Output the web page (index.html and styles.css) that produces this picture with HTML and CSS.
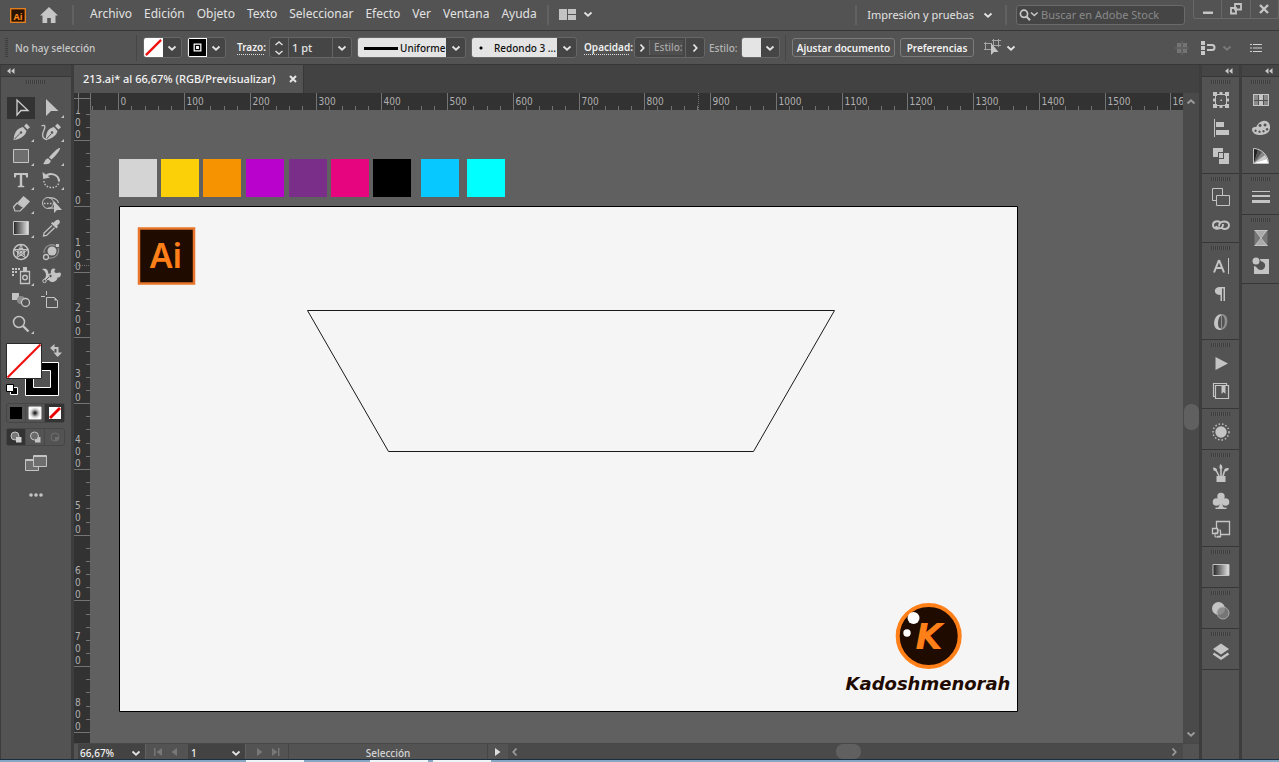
FILE: index.html
```html
<!DOCTYPE html>
<html lang="es">
<head>
<meta charset="utf-8">
<title>213.ai* al 66,67% (RGB/Previsualizar)</title>
<link rel="stylesheet" href="styles.css">
</head>
<body>
<svg class="defs" aria-hidden="true">
  <defs>
    <symbol id="chev" viewBox="0 0 10 10"><path d="M1.5 3.5 5 6.7 8.500 3.500" fill="none" stroke="currentColor" stroke-width="1.8"/></symbol>
    <symbol id="chev-right" viewBox="0 0 10 10"><path d="M3.500 1.500 6.700 5 3.500 8.500" fill="none" stroke="currentColor" stroke-width="1.8"/></symbol>
    <symbol id="collapse" viewBox="0 0 8 6"><path d="M3.500 0v6L0 3zM7.500 0v6L4 3z" fill="currentColor"/></symbol>
    <linearGradient id="fade"><stop offset="0" stop-color="#222"/><stop offset="1" stop-color="#e6e6e6"/></linearGradient>
    <radialGradient id="dot"><stop offset="0" stop-color="#000"/><stop offset=".2" stop-color="#444"/><stop offset=".6" stop-color="#c4c4c4"/><stop offset="1" stop-color="#fff"/></radialGradient>
  </defs>
</svg>

<header class="menubar">
  <svg class="app-logo" viewBox="0 0 16 15"><rect x=".75" y=".75" width="14.500" height="13.500" fill="#2a1200" stroke="#ff8a1c" stroke-width="1.2"/><text x="8" y="11.500" class="app-logo-text">Ai</text></svg>
  <button class="bare home" aria-label="Inicio"><svg viewBox="0 0 18 16"><path d="M9 0 0 8.500h2.500V16h4.700v-5h3.600v5h4.700V8.500H18z" fill="#c6c6c6"/></svg></button>
  <span class="rule"></span>
  <nav class="menus">
    <button class="bare">Archivo</button><button class="bare">Edición</button><button class="bare">Objeto</button><button class="bare">Texto</button><button class="bare">Seleccionar</button><button class="bare">Efecto</button><button class="bare">Ver</button><button class="bare">Ventana</button><button class="bare">Ayuda</button>
  </nav>
  <span class="rule"></span>
  <button class="bare layout" aria-label="Organizar documentos"><svg viewBox="0 0 17 11" width="17" height="11"><path d="M0 0h8v11H0zM9 0h8v5H9zM9 6h8v5H9z" fill="#c4c4c4"/></svg><svg class="c10"><use href="#chev"/></svg></button>
  <span class="grow"></span>
  <span class="rule"></span>
  <button class="bare workspace-name">Impresión y pruebas<svg class="c10"><use href="#chev"/></svg></button>
  <span class="rule"></span>
  <label class="search"><svg viewBox="0 0 20 12" width="20" height="12"><circle cx="5" cy="4.800" r="3.600" fill="none" stroke="#c8c8c8" stroke-width="1.700"/><path d="m7.500 7.500 3.500 3.800" stroke="#c8c8c8" stroke-width="2"/><path d="m12 3.500 3.300 3 3.300-3" fill="none" stroke="#c8c8c8" stroke-width="1.500"/></svg><input type="text" placeholder="Buscar en Adobe Stock" aria-label="Buscar en Adobe Stock"></label>
  <div class="window-buttons">
    <button class="bare" aria-label="Minimizar"><svg viewBox="0 0 12 12"><path d="M1 8.500h10v2.500H1z" fill="#c4c4c4"/></svg></button>
    <button class="bare" aria-label="Restaurar"><svg viewBox="0 0 12 12"><path d="M5 1h6v5.500H5zM1 5h5v5.500H1z" fill="#535353" stroke="#c4c4c4" stroke-width="1.800"/></svg></button>
    <button class="bare" aria-label="Cerrar"><svg viewBox="0 0 12 12"><path d="m2 2 8 8M10 2l-8 8" stroke="#c4c4c4" stroke-width="2.400"/></svg></button>
  </div>
</header>

<section class="control">
  <span class="v-grip"></span>
  <span class="status-text">No hay selección</span>
  <span class="rule dark"></span>
  <div class="combo fill"><svg class="chip" viewBox="0 0 20 20"><path fill="#fff" d="M0 0h20v20H0z"/><path d="M2 18 18 2" stroke="#f01010" stroke-width="2.400"/></svg><button class="drop" aria-label="Relleno"><svg class="c10"><use href="#chev"/></svg></button></div>
  <div class="combo stroke"><svg class="chip" viewBox="0 0 20 20"><path fill="#fff" d="M0 0h20v20H0z"/><path fill="#000" d="M1 1h18v18H1z"/><path fill="none" stroke="#fff" stroke-width="1.300" d="M6.500 6.500h7v7h-7z"/><path fill="#fff" d="M8.500 8.500h3v3h-3z"/></svg><button class="drop" aria-label="Color de trazo"><svg class="c10"><use href="#chev"/></svg></button></div>
  <label class="lbl trazo" for="weight">Trazo:</label>
  <div class="combo weight"><button class="drop" aria-label="Cambiar grosor"><svg viewBox="0 0 10 16" width="10" height="16"><path d="M1.500 5 5 2l3.500 3M1.500 11 5 14l3.500-3" fill="none" stroke="#ddd" stroke-width="1.500"/></svg></button><input id="weight" type="text" value="1 pt"><button class="drop" aria-label="Grosores"><svg class="c10"><use href="#chev"/></svg></button></div>
  <div class="combo light profile"><select aria-label="Perfil de anchura"><option>Uniforme</option></select><span class="drop over"><svg class="c10"><use href="#chev"/></svg></span></div>
  <div class="combo light brush"><select aria-label="Pincel"><option>Redondo 3 ...</option></select><span class="drop over"><svg class="c10"><use href="#chev"/></svg></span></div>
  <button class="bare lbl opacity">Opacidad:</button>
  <div class="combo opts"><button class="drop" aria-label="Opacidad"><svg class="c10"><use href="#chev-right"/></svg></button><span class="disabled">Estilo:</span><button class="drop" aria-label="Más"><svg class="c10"><use href="#chev-right"/></svg></button></div>
  <span class="style-label">Estilo:</span>
  <div class="combo style"><span class="chip plain"></span><button class="drop" aria-label="Estilo gráfico"><svg class="c10"><use href="#chev"/></svg></button></div>
  <span class="rule dark"></span>
  <button class="push fit">Ajustar documento</button>
  <button class="push prefs">Preferencias</button>
  <button class="bare similar" aria-label="Seleccionar objetos similares"><svg viewBox="0 0 17 17" width="17" height="17"><path d="M1.500 4.500h6v6h-6zM9.500 1.500h5v5h-5zM0 4.500h2M0 10.500h2M1.500 3v1M8 1.500h9M8 6.500h9M9.500 0v2M14.500 0v8" fill="none" stroke="#a5a5a5"/><path d="M7 4v12l3-3h4.500z" fill="#c4c4c4"/></svg><svg class="c10"><use href="#chev"/></svg></button>
  <span class="grow"></span>
  <svg class="dim" viewBox="0 0 14 14" width="14" height="14"><path d="M2 2h4v4H2zM8 2h4v4H8zM2 8h4v4H2zM8 8h4v4H8z" fill="#747474"/><path d="M7 0v14M0 7h14" stroke="#6c6c6c"/></svg>
  <button class="bare snap" aria-label="Ajustar a"><svg viewBox="0 0 15 14" width="15" height="14"><path d="M0 0h4v4H0zM0 5h4v4H0zM0 10h4v4H0z" fill="#c8c8c8"/><path d="M6 4h5a2.500 2.500 0 0 1 0 5H6" fill="none" stroke="#c8c8c8" stroke-width="2"/></svg><svg class="c10 faint"><use href="#chev"/></svg></button>
  <button class="bare list" aria-label="Menú"><svg viewBox="0 0 12 10" width="12" height="10"><path d="M0 1.500h2M3 1.500h9M0 5h2M3 5h9M0 8.500h2M3 8.500h9" stroke="#d0d0d0" stroke-width="1.200"/></svg></button>
</section>

<main class="workspace">
  <aside class="tools">
    <div class="panel-head left"><svg class="collapse"><use href="#collapse"/></svg></div>
    <div class="grip wide"></div>
    <div class="tool-grid">
      <button class="tool on" aria-label="Selección"><svg viewBox="0 0 30 24"><path d="M11 4v15l4-4.500h7z" fill="none" stroke="#d0d0d0" stroke-width="1.300"/></svg></button>
      <button class="tool more" aria-label="Selección directa"><svg viewBox="0 0 30 24"><path d="M10 3v17l5-5h7.500z"/></svg></button>
      <button class="tool more" aria-label="Pluma"><svg viewBox="0 0 30 24"><path d="m18 6 2.500-2.500 3.500 3.700-2.500 2.300zM17 7l3.500 4c-1 4-4 6.500-9.500 8.500L7.500 20l.5-3.500c1.500-5.500 4-8.500 9-9.500z"/><path d="m8.500 19 5.500-5.500" stroke="#535353"/><circle cx="15" cy="12.500" r="1.200" fill="#535353"/></svg></button>
      <button class="tool more" aria-label="Curvatura"><svg viewBox="0 0 30 24"><path d="m19 6 2.500-2.500 3.500 3.700-2.500 2.300zM18 7l3.500 4c-1 4-4 6.500-9.500 8.500L9.500 20l.5-3.500c1-5.500 3-8.500 8-9.500z"/><path d="m10.500 19 5-5.500" stroke="#535353"/><circle cx="16" cy="12.500" r="1.200" fill="#535353"/><path d="M5.500 6c4-2 4 1 2.500 4s-3 9 3 9.500" fill="none" stroke="#c4c4c4" stroke-width="1.300"/></svg></button>
      <button class="tool more" aria-label="Rectángulo"><svg viewBox="0 0 30 24"><path d="M7.500 5.500h15v13h-15z" fill="#6e6e6e" stroke="#c4c4c4"/></svg></button>
      <button class="tool more" aria-label="Pincel"><svg viewBox="0 0 30 24"><path d="M24 4c1 1-5 9-8.500 11.500l-2.500-2C16 9.500 22.500 3 24 4zM12 14.300l2.800 2.400c-.3 3.300-4 4.300-7.800 3 2-.7 1.500-4.700 5-5.400z"/></svg></button>
      <button class="tool more" aria-label="Texto"><svg viewBox="0 0 30 24"><path d="M8 5h14v4.500h-1.700L19.500 7H16.200v10.500l2 .5v1.300h-6.400V18l2-.5V7h-3.300l-.8 2.500H8z"/></svg></button>
      <button class="tool more" aria-label="Rotar"><svg viewBox="0 0 30 24"><path d="M9 9c4-5.500 14-3 14 4.500" fill="none" stroke="#c4c4c4" stroke-width="2"/><path d="m6.500 4 .7 7 6.800-1.500z"/><path d="M8 13c0 8 14 9 15 1" fill="none" stroke="#c4c4c4" stroke-dasharray="1.500 1.500" stroke-width="1.400"/></svg></button>
      <button class="tool more" aria-label="Borrador"><svg viewBox="0 0 30 24"><path d="m11.500 10.500 6-6.500 6.500 5.500-6 6.500z"/><path d="m11 11-3.500 4 1.500 4h5l3.500-3.500z" fill="none" stroke="#c4c4c4" stroke-width="1.200"/></svg></button>
      <button class="tool" aria-label="Creador de formas"><svg viewBox="0 0 30 24"><circle cx="12" cy="11" r="5.500" fill="none" stroke="#c4c4c4"/><path d="M13 6c5-1 9 2 9.500 5M12 16c2 .5 4 0 6 0" fill="none" stroke="#c4c4c4" stroke-width="1.200"/><path d="M8 11.500h10" stroke="#c4c4c4" stroke-dasharray="1.500 1.500" stroke-width="1.500"/><path d="M18 9v12l3-3h5z"/></svg></button>
      <button class="tool more" aria-label="Degradado"><svg viewBox="0 0 30 24"><path d="M7.500 5.500h15v13h-15z" fill="url(#fade)" stroke="#c4c4c4"/></svg></button>
      <button class="tool" aria-label="Cuentagotas"><svg viewBox="0 0 30 24"><path d="M23 4c1.500 1.500 1 3-.7 4.500l-1.300 1.300 1 1-1.500 1.700L15 7.500l1.500-1.500 1 .7C19.500 4.500 21.500 3 23 4z"/><path d="m16 9.500-8 7.500-.5 3 3-.5 8-7.700" fill="none" stroke="#c4c4c4" stroke-width="1.300"/></svg></button>
      <button class="tool" aria-label="Malla de simetría"><svg viewBox="0 0 30 24"><circle cx="15" cy="12" r="7.500" fill="none" stroke="#c4c4c4" stroke-width="1.500"/><circle cx="15" cy="12" r="3.600" fill="none" stroke="#c4c4c4"/><path d="m15 4.500 4.500 13.500L8 9.500h14L10.500 18z" fill="none" stroke="#c4c4c4"/><circle cx="15" cy="12" r="1.600"/></svg></button>
      <button class="tool" aria-label="Fusión"><svg viewBox="0 0 30 24"><circle cx="16" cy="11" r="4.500"/><circle cx="10" cy="17" r="2.500" fill="none" stroke="#c4c4c4" stroke-width="1.300"/><path d="M8 13c0-7 7-10 12-7M22 8c2 6-3 11-9 10" fill="none" stroke="#8c8c8c" stroke-width="1.300"/><path d="M20 4h3v3h-3z"/></svg></button>
      <button class="tool more" aria-label="Rociador de símbolos"><svg viewBox="0 0 30 24"><path d="M6 4h2v2H6zM9 4h2v2H9zM12 4h2v2h-2zM6 7h2v2H6zM9 7h2v2H9zM6 10h2v2H6zM17 3h4v4h-4z"/><path d="M14.500 7.500h9v12h-9z" fill="none" stroke="#c4c4c4" stroke-width="1.300"/><circle cx="19" cy="13.500" r="2.300" fill="none" stroke="#c4c4c4" stroke-width="1.400"/></svg></button>
      <button class="tool" aria-label="Deformación de posición libre"><svg viewBox="0 0 30 24"><path d="M6 5c5-1 6 1 6.500 5l2.500-1c-1-4 3-6 4.500-3.500-2 1-1 3.500 1 3.500s3.500-1.500 4.500.5c0 3-1.500 4.500-3.500 4 0 2-2 4.500-5 4.500s-3-2-4.500-2-2.500 1-4 2l-1-2c2-1.500 3-3 3-5S9 7 6 5z"/><path d="m9 17 6-6" stroke="#535353"/><circle cx="14.500" cy="12" r="1.700" fill="#535353" stroke="#c4c4c4"/><circle cx="8.500" cy="17" r="1.700" fill="#535353" stroke="#c4c4c4"/></svg></button>
      <button class="tool" aria-label="Fusionar"><svg viewBox="0 0 30 24"><path d="M6 5h7v7H6z"/><circle cx="15" cy="12" r="4" fill="#8d8d8d"/><circle cx="19.500" cy="14.500" r="4" fill="#535353" stroke="#c4c4c4" stroke-width="1.300"/></svg></button>
      <button class="tool" aria-label="Mesa de trabajo"><svg viewBox="0 0 30 24"><path d="M10.500 9.500h8l3 3v7h-11zM10.500 3v4M5 8.500h4" fill="none" stroke="#c4c4c4"/><path d="M18.500 9.500v3h3z"/></svg></button>
      <button class="tool more" aria-label="Zoom"><svg viewBox="0 0 30 24"><circle cx="13" cy="10" r="5.500" fill="none" stroke="#c4c4c4" stroke-width="1.500"/><path d="m17 14 5.500 5.500" stroke="#c4c4c4" stroke-width="2.400"/></svg></button>
    </div>
    <svg class="fill-stroke" viewBox="0 0 60 58" role="img" aria-label="Relleno y trazo">
      <path d="M19.500 19.500h33v33h-33z" fill="#000" stroke="#fff"/><path d="M27.500 27.500h17v17h-17z" fill="#535353" stroke="#fff"/>
      <path d="M.5.500h35v35H.500z" fill="#fff" stroke="#2a2a2a"/><path d="M1.500 34.500 34.500 1.500" stroke="#f01010" stroke-width="2.200"/>
      <path d="M46 5h5.500v8" fill="none" stroke="#c4c4c4" stroke-width="2"/><path d="M44 5l4.500-4v8zM47.500 9.500h8.500L51.700 14z" fill="#c4c4c4"/>
      <path d="M4.500 44.500h7v7h-7z" fill="#000" stroke="#fff"/><path d="M.5 41.500h7v7h-7z" fill="#fff" stroke="#000"/>
    </svg>
    <div class="segments">
      <button aria-label="Color"><svg viewBox="0 0 14 14"><path d="M1 1h12v12H1z" fill="#000"/></svg></button>
      <button aria-label="Degradado"><svg viewBox="0 0 14 14"><path d="M1 1h12v12H1z" fill="url(#dot)" stroke="#eee"/></svg></button>
      <button class="on" aria-label="Ninguno"><svg viewBox="0 0 14 14"><path d="M1 1h12v12H1z" fill="#fff"/><path d="M2 12 12 2" stroke="#e80000" stroke-width="2.800"/></svg></button>
    </div>
    <div class="segments modes">
      <button class="on" aria-label="Dibujar normal"><svg viewBox="0 0 14 14"><circle cx="6" cy="6" r="4" fill="#777" stroke="#c4c4c4"/><path d="M7 7h5.500v5.500H7z" fill="#d0d0d0"/></svg></button>
      <button aria-label="Dibujar detrás"><svg viewBox="0 0 14 14"><path d="M7 7h5.500v5.500H7z" fill="#c4c4c4"/><circle cx="6.500" cy="6" r="4" fill="#6a6a6a" stroke="#c4c4c4"/></svg></button>
      <button aria-label="Dibujar dentro"><svg viewBox="0 0 14 14"><circle cx="7" cy="7" r="4" fill="none" stroke="#6e6e6e"/><path d="M7 7h4v1a4 4 0 0 1-4 3z" fill="#6e6e6e"/></svg></button>
    </div>
    <button class="bare screen-mode" aria-label="Modo de pantalla"><svg viewBox="0 0 22 16" width="22" height="16"><path d="M.5 4.500h13v11H.500z" fill="#6e6e6e" stroke="#c4c4c4"/><path d="M8.500.500h13v11h-13z" fill="#6e6e6e" stroke="#c4c4c4"/><path d="M8 1.500h14M0 5.500h8" stroke="#c4c4c4"/></svg></button>
    <button class="bare ellipsis" aria-label="Editar barra de herramientas"><svg viewBox="0 0 14 4" width="14" height="4"><circle cx="2" cy="2" r="1.800"/><circle cx="7" cy="2" r="1.800"/><circle cx="12" cy="2" r="1.800"/></svg></button>
  </aside>

  <section class="document">
    <div class="tabs"><div class="tab">213.ai* al 66,67% (RGB/Previsualizar)<button class="bare close" aria-label="Cerrar pestaña"><svg viewBox="0 0 8 8" width="8" height="8"><path d="m1 1 6 6M7 1 1 7" stroke="#e6e6e6" stroke-width="2"/></svg></button></div></div>
    <div class="ruler-corner"><svg width="16" height="17"><path d="M4.500 0v17M0 5.500h16" stroke="#7a7a7a"/></svg></div>
    <svg class="ruler top" id="ruler-x"></svg>
    <svg class="ruler side" id="ruler-y"></svg>
    <svg class="canvas">
      <g class="swatches">
        <rect x="29" y="49" fill="#d4d4d4"/><rect x="71" y="49" fill="#fcd008"/><rect x="113" y="49" fill="#f59300"/><rect x="156" y="49" fill="#b902cc"/><rect x="199" y="49" fill="#7a2e8a"/><rect x="241" y="49" fill="#e6047f"/><rect x="283" y="49" fill="#000"/><rect x="331" y="49" fill="#08c9ff"/><rect x="377" y="49" fill="#0ff"/>
      </g>
      <path d="M29.500 96.500h898v505h-898z" fill="#f5f5f5" stroke="#000"/>
      <path d="M49 118.500h55v55H49z" fill="#1f0b00" stroke="#e8752a" stroke-width="2.500"/>
      <text class="mark" x="76" y="158">Ai</text>
      <path d="M217.500 200.500h527l-81 141H298.500z" fill="none" stroke="#1a1a1a"/>
      <circle cx="838.700" cy="526" r="31" fill="#1f0b00" stroke="#ff7f18" stroke-width="4"/>
      <circle cx="823.500" cy="508" r="6" fill="#fff"/><circle cx="817" cy="523" r="3.700" fill="#fff"/>
      <text class="monogram" x="839" y="539">K</text>
      <text class="brand-name" x="838" y="580">Kadoshmenorah</text>
    </svg>
    <div class="vscroll"><svg class="c10"><use href="#chev"/></svg><span class="thumb"></span><svg class="c10"><use href="#chev"/></svg></div>
    <footer class="statusbar">
      <div class="mini zoom"><select aria-label="Zoom"><option>66,67%</option></select><svg class="c10"><use href="#chev"/></svg></div>
      <button class="bare step" aria-label="Primera"><svg viewBox="0 0 9 8"><path d="M0 0h1.500v8H0zM8 0v8L2.500 4z"/></svg></button>
      <button class="bare step" aria-label="Anterior"><svg viewBox="0 0 9 8"><path d="M7 0v8L1.500 4z"/></svg></button>
      <div class="mini page"><select aria-label="Mesa de trabajo"><option>1</option></select><svg class="c10"><use href="#chev"/></svg></div>
      <button class="bare step" aria-label="Siguiente"><svg viewBox="0 0 9 8"><path d="M2 0v8l5.500-4z"/></svg></button>
      <button class="bare step" aria-label="Última"><svg viewBox="0 0 9 8"><path d="M1 0v8l5.500-4zM7 0h1.500v8H7z"/></svg></button>
      <span class="current-tool">Selección</span>
      <button class="bare play" aria-label="Menú de estado"><svg viewBox="0 0 6 8" width="6" height="8"><path d="M0 0v8l5.500-4z" fill="#ddd"/></svg></button>
      <div class="hscroll"><svg class="c10"><use href="#chev-right"/></svg><span class="thumb"></span><svg class="c10"><use href="#chev-right"/></svg></div>
    </footer>
  </section>

  <aside class="dock">
    <div class="panel-head"><svg class="collapse"><use href="#collapse"/></svg></div>
    <div class="group">
      <button aria-label="Transformar"><svg viewBox="0 0 20 20"><path d="M4.500 4.500h11v11h-11z" fill="none" stroke="#c4c4c4"/><path d="M2 2h4v4H2zM8.500 2h3v3h-3zM14 2h4v4h-4zM2 8.500h3v3H2zM15 8.500h3v3h-3zM2 14h4v4H2zM8.500 15h3v3h-3zM14 14h4v4h-4zM9.500 9.500h1.500V11H9.500z"/></svg></button>
      <button aria-label="Alinear"><svg viewBox="0 0 20 20"><path d="M3 1h1v18H3zM5 4h8v5H5zM5 12h13v5H5z"/></svg></button>
      <button aria-label="Buscatrazos"><svg viewBox="0 0 20 20"><path d="M2 2h10v4H7v5H2zM13 7h5v11H8v-5h5z"/><path d="M8 7h4v5H8z"/></svg></button>
    </div>
    <div class="group">
      <button aria-label="Exportar recursos"><svg viewBox="0 0 20 20"><path d="M1.500 1.500h10v12h-10z" fill="none" stroke="#c4c4c4"/><path d="M5.500 8.500h13v10h-13z" fill="#535353" stroke="#c4c4c4"/></svg></button>
      <button aria-label="Vínculos"><svg viewBox="0 0 20 20"><path d="M9 7.500C7 5.500 2 6 2 10s5 4.500 7 2.500M8 11.500c0-7 10-6 10-1.500s-6 5-7.500 2.500M12 9c0 6-6 5-7 2" fill="none" stroke="#c4c4c4" stroke-width="1.900"/></svg></button>
    </div>
    <div class="group">
      <button aria-label="Carácter"><svg viewBox="0 0 20 20"><path d="M8 4 3 16.500M8 4l5 12.500M5 12h6.500" fill="none" stroke="#c4c4c4" stroke-width="2"/><path d="M17.500 2v16" stroke="#c4c4c4"/></svg></button>
      <button aria-label="Párrafo"><svg viewBox="0 0 20 20"><path d="M14 3v14h-1.500V4.500H11V17H9.500v-6C2 11 2 3 9 3z"/></svg></button>
      <button aria-label="OpenType"><svg viewBox="0 0 20 20"><path fill-rule="evenodd" d="M10.500 2C2 2 0 18 9 18h1V2zM10 3.500v13C5.500 17 6.500 5 10 3.500z"/><path fill-rule="evenodd" d="M10 2c9-1 8 15 0 16zM11 3.500V16C15 14 14.500 4 11 3.500z" fill="#8f8f8f"/></svg></button>
    </div>
    <div class="group">
      <button aria-label="Acciones"><svg viewBox="0 0 20 20"><path d="M4.500 4v13L17 10.500z"/></svg></button>
      <button aria-label="Bibliotecas"><svg viewBox="0 0 20 20"><path d="M4.500 4.500h13v13h-13zM4.500 15.500h-2v-13h13v2" fill="none" stroke="#c4c4c4" stroke-width="1.200"/><path d="M10.500 4h4v9l-2-2-2 2z"/></svg></button>
    </div>
    <div class="group">
      <button aria-label="Apariencia"><svg viewBox="0 0 20 20"><circle cx="10" cy="10" r="5.700"/><circle cx="10" cy="10" r="8" fill="none" stroke="#c4c4c4" stroke-width="1.400" stroke-dasharray="1.500 2"/></svg></button>
    </div>
    <div class="group">
      <button aria-label="Pinceles"><svg viewBox="0 0 20 20"><path d="M5.500 13h9v6h-9z"/><path d="M9.500 1c2.500 2 2.500 4.500.500 6.500C8 5.500 8 3 9.500 1zM2 4.500c3 0 4.500 1.500 4 4-2.500 0-4-1-4-4zM18 5.500c-1 2.500-3 3.500-5 2.500 0-2.500 2.500-3.500 5-2.500z"/><path d="M10 7v6M5.500 8 8 13M13.500 8 12 13" stroke="#c4c4c4" stroke-width="1.600"/></svg></button>
      <button aria-label="Símbolos"><svg viewBox="0 0 20 20"><circle cx="10" cy="5.500" r="3.700"/><circle cx="5.500" cy="11" r="3.800"/><circle cx="14.500" cy="11" r="3.800"/><path d="M9 8h2c0 5 .5 7 2 8.500h2.500V18h-11v-1.500H7C8.500 15 9 13 9 8z"/></svg></button>
      <button aria-label="Estilos gráficos"><svg viewBox="0 0 20 20"><path d="M5.500 9V2.500h13v13H10M1.500 9.500h5v5h-5zM6 17.500h3.500V12" fill="none" stroke="#c4c4c4" stroke-width="1.300"/><path d="M4 14h3v-3h2.500v7H4z" fill="none" stroke="#c4c4c4"/></svg></button>
    </div>
    <div class="group"><button aria-label="Degradado"><svg viewBox="0 0 20 20"><path d="M2 4.500h16v11H2z" fill="url(#fade)" stroke="#c4c4c4"/></svg></button></div>
    <div class="group"><button aria-label="Transparencia"><svg viewBox="0 0 20 20"><circle cx="7.500" cy="7.500" r="6.500"/><circle cx="12" cy="12" r="6" fill="#808080" fill-opacity=".8" stroke="#a8a8a8"/></svg></button></div>
    <div class="group"><button aria-label="Capas"><svg viewBox="0 0 20 20"><path d="m10 1.500 8 5.500-8 5.500L2 7z"/><path d="m2.500 11.500 7.500 5 7.500-5" fill="none" stroke="#c4c4c4" stroke-width="2.400"/></svg></button></div>
  </aside>

  <aside class="dock">
    <div class="panel-head"><svg class="collapse"><use href="#collapse"/></svg></div>
    <div class="group">
      <button aria-label="Muestras"><svg viewBox="0 0 20 20"><path d="M2 4h16v12H2z"/><path d="M3 5h4v5H3zM3 11h4v4H3zM13 5h4v5h-4zM13 11h4v4h-4z" fill="#8a8a8a"/><path d="M7.500 5v10M12.500 5v10M3 10.500h14" stroke="#535353"/></svg></button>
      <button aria-label="Color"><svg viewBox="0 0 20 20"><path fill-rule="evenodd" d="M12 3c4-1 7.500 2 7 7-.5 6-6 7-11 7-4 0-7-3-7-5.500 0-3 3.500-2 4.500-3S7 4 12 3zM14 5.500a1.500 1.500 0 1 0 .1 0zM16 10a1.300 1.300 0 1 0 .1 0zM4.500 11.500a1.200 1.200 0 1 0 .1 0zM8.500 12.500a1.200 1.200 0 1 0 .1 0zM12.500 12a1.200 1.200 0 1 0 .1 0zM9 6a1.500 1.500 0 1 0 .1 0z"/></svg></button>
      <button aria-label="Guía de color"><svg viewBox="0 0 20 20"><path d="M2.500 2.500c8 0 15 7 15 15h-15z" fill="#888" stroke="#c4c4c4"/><path d="M3 17V3l4 1z" fill="#222"/><path d="M3 17 7 4l4 2z" fill="#555"/><path d="M3 17 14 9l2 4z" fill="#ccc"/><path d="m3 17 13-4 1 4z" fill="#fff"/></svg></button>
    </div>
    <div class="group"><button aria-label="Trazo"><svg viewBox="0 0 20 20"><path d="M1 4h18v1H1zM1 8h18v2H1zM1 13h18v3H1z"/></svg></button></div>
    <div class="group">
      <button aria-label="Variables"><svg viewBox="0 0 20 20"><path d="M3.500 2h13v16h-13z" fill="#777"/><path d="M3.500 2h13L10 9.500zM3.500 18h13L10 11z" fill="#aaa"/><path d="M3.500 2.500h13M4 2l12 16M16 2 4 18M3.500 17.500h13" stroke="#c4c4c4"/></svg></button>
      <button aria-label="Patrón"><svg viewBox="0 0 20 20"><path d="M9 3h9v15H3v-8c3 0 3 4 7 4s6-6 2-8c-1.500-.7-3-1-3-3z"/><circle cx="5" cy="5" r="3.500"/></svg></button>
    </div>
  </aside>
</main>
<div class="taskbar"><span></span><span></span><span></span></div>
<script src="rulers.js"></script>
</body>
</html>
```
FILE: styles.css
```css
* { box-sizing: border-box; }
body {
  margin: 0;
  height: 100vh;
  display: flex;
  flex-direction: column;
  overflow: hidden;
  background: #535353;
  color: #e2e2e2;
  font: 12px/16px "Noto Sans", "Open Sans", sans-serif;
}
button, input, select { font: inherit; color: inherit; margin: 0; padding: 0; border: 0; border-radius: 0; background: none; }
select { appearance: none; }
svg { display: block; flex: none; }
.defs { position: absolute; width: 0; height: 0; }
.bare { display: flex; align-items: center; white-space: nowrap; }
.grow { flex: 1; }
.c10 { width: 10px; height: 10px; color: #e4e4e4; }
.faint { color: #7a7a7a; }
.rule { width: 2px; height: 20px; background: #616161; flex: none; }
.rule.dark { width: 1px; height: 26px; background: #464646; }

/* Menu bar */
.menubar { height: 31px; flex: none; display: flex; align-items: center; padding-left: 10px; border-bottom: 1px solid #373737; }
.app-logo { width: 16px; height: 15px; }
.app-logo-text { font: bold 9px "Open Sans", sans-serif; fill: #ff8a1c; text-anchor: middle; }
.home { margin: 0 14px; }
.home svg { width: 18px; height: 16px; }
.menus { display: flex; gap: 12px; padding: 0 10px 2px 16px; }
.layout { gap: 7px; padding: 0 0 2px 10px; }
.workspace-name { gap: 9px; padding: 0 12px 0 10px; font-size: 11px; }
.search { display: flex; align-items: center; width: 169px; height: 20px; margin-left: 9px; padding-left: 2px; border: 1px solid #6a6a6a; border-radius: 3px; background: #454545; font-size: 11px; }
.search input { width: 100%; min-width: 0; padding-left: 2px; }
.search input::placeholder { color: #8a8a8a; opacity: 1; }
.window-buttons { display: flex; align-self: flex-start; width: 86px; height: 19px; margin-left: 8px; border: 1px solid #686868; border-top: 0; border-radius: 0 0 3px 3px; }
.window-buttons button { flex: 1; justify-content: center; }
.window-buttons button + button { border-left: 1px solid #686868; }
.window-buttons svg { width: 12px; height: 12px; }

/* Control bar */
.control { height: 34px; flex: none; display: flex; align-items: center; padding: 0 17px 0 5px; border-bottom: 1px solid #373737; font-size: 10px; font-weight: 500; line-height: 14px; white-space: nowrap; }
.v-grip { width: 3px; height: 20px; background: repeating-linear-gradient(#3d3d3d 0 1px, #535353 1px 2px); }
.status-text { width: 128px; padding-left: 7px; color: #c8c8c8; }
.combo { display: flex; height: 21px; border: 1px solid #666; border-radius: 3px; background: #454545; overflow: hidden; flex: none; }
.chip { width: 19px; height: 19px; }
.chip.plain { background: #e4e4e4; }
.drop { flex: 1; display: flex; align-items: center; justify-content: center; }
.fill { width: 39px; margin-left: 6px; }
.stroke { width: 39px; margin-left: 5px; }
.lbl { border-bottom: 1px dotted #ddd; font-weight: 600; color: #f0f0f0; line-height: 13px; flex: none; }
.trazo { width: 27px; margin: 0 5px 0 11px; }
.weight { width: 83px; }
.weight input { width: 45px; padding-left: 3px; border: solid #666; border-width: 0 1px; font-size: 11px; }
.light { display: grid; grid-template-columns: 1fr 19px; margin-left: 5px; }
.light select { min-width: 0; background: #e4e4e4; color: #111; }
.profile { width: 109px; }
.profile select { padding-left: 42px; background: linear-gradient(#000, #000) 6px 9px / 34px 3px no-repeat #e4e4e4; }
.brush { width: 106px; }
.brush select { padding-left: 22px; background: radial-gradient(circle at 9px 10px, #000 1px, #e4e4e4 2px); }
.opacity { width: 45px; margin: 0 5px 0 7px; }
.opts { width: 71px; }
.opts .drop { flex: 0 0 13px; }
.opts .drop:last-child { flex-basis: 19px; border-left: 1px solid #666; }
.disabled { flex: 1; margin: 2px 2px 2px 1px; padding-left: 4px; border-left: 1px solid #666; background: #4e4e4e; color: #a8a8a8; }
.style-label { width: 32px; margin-left: 4px; color: #b4b4b4; }
.style { width: 39px; }
.control .style + .rule { margin: 0 6px 0 5px; }
.push { height: 19px; border: 1px solid #7c7c7c; border-radius: 3px; color: #f2f2f2; font-weight: 600; flex: none; }
.fit { width: 103px; }
.prefs { width: 74px; margin-left: 5px; }
.similar { gap: 5px; margin-left: 10px; }
.dim { margin-right: 12px; }
.snap { gap: 6px; }
.list { margin-left: 18px; }

/* Work area */
.workspace { flex: 1; min-height: 0; display: flex; gap: 3px; background: #3d3d3d; }
.panel-head { height: 12px; display: flex; justify-content: flex-end; align-items: center; padding-right: 6px; background: #454545; border-bottom: 1px solid #373737; flex: none; }
.panel-head.left { justify-content: flex-start; padding-left: 6px; }
.collapse { width: 8px; height: 6px; color: #c8c8c8; }
.grip, .group::before { content: ""; display: block; width: 19px; height: 4px; margin: 3px 0 2px 9px; background: repeating-linear-gradient(90deg, #3d3d3d 0 1px, #5a5a5a 1px 2px); }

/* Tools panel */
.tools { width: 71px; flex: none; display: flex; flex-direction: column; background: #535353; border-left: 1px solid #3d3d3d; }
.grip.wide { margin: 3px 0 12px 25px; }
.tool-grid { display: grid; grid-template-columns: 30px 30px; grid-auto-rows: 24px; margin-left: 5px; padding-bottom: 2px; }
.tool { position: relative; border-radius: 3px; fill: #c4c4c4; }
.tool svg { width: 30px; height: 24px; }
.tool.on { background: linear-gradient(#333, #333) 1px 1px / 28px 22px no-repeat; }
.tool.more::after { content: ""; position: absolute; right: 2px; bottom: 2px; border: solid; border-width: 0 0 3px 3px; border-color: transparent transparent #c4c4c4; }
.fill-stroke { width: 60px; height: 58px; margin: 5px 0 2px 5px; }
.segments { display: grid; grid-template-columns: repeat(3, 1fr); width: 59px; height: 20px; margin: 0 0 5px 5px; border: 1px solid #464646; border-radius: 3px; }
.segments button { display: flex; align-items: center; justify-content: center; border-right: 1px solid #484848; }
.segments button:last-child { border-right: 0; }
.segments svg { width: 14px; height: 14px; }
.segments .on { background: #333; }
.segments.modes { height: 18px; }
.screen-mode { margin: 4px 0 0 24px; }
.ellipsis { margin: 22px 0 0 28px; fill: #c4c4c4; }

/* Document window */
.document { flex: 1; min-width: 0; display: grid; grid-template-columns: 16px minmax(0, 1fr) 16px; grid-template-rows: 28px 17px minmax(0, 1fr) 16px; background: #535353; }
.tabs { grid-column: 1 / -1; background: #424242; display: flex; }
.tab { display: flex; align-items: center; justify-content: space-between; width: 230px; padding: 0 6px 0 9px; background: #535353; border-right: 1px solid #383838; font-size: 11px; font-weight: 500; color: #f4f4f4; white-space: nowrap; }
.ruler-corner, .ruler { background: #323232; width: 100%; height: 100%; overflow: hidden; }
.ruler text { font: 10px "DejaVu Sans Condensed", "Noto Sans", sans-serif; fill: #b0b0b0; }
.ruler line { stroke: #747474; shape-rendering: crispEdges; }
.ruler .cursor { stroke-dasharray: 1 1; }
.side { grid-area: 3 / 1; }
.canvas { grid-area: 3 / 2; width: 100%; height: 100%; background: #606060; }
.swatches rect { width: 38px; height: 38px; }
.mark { font: bold 34px "Noto Sans", sans-serif; font-weight: 600; fill: #ff7f18; text-anchor: middle; }
.monogram { font: italic bold 35px "DejaVu Sans", sans-serif; fill: #ff7f18; text-anchor: middle; }
.brand-name { font: italic bold 18px "DejaVu Sans", sans-serif; fill: #1f0b00; text-anchor: middle; }
.vscroll { grid-area: 2 / 3 / 4 / 4; display: flex; flex-direction: column; align-items: center; padding: 4px 0; background: #4a4a4a; }
.vscroll .c10, .hscroll .c10 { color: #9c9c9c; }
.vscroll .c10:first-child, .hscroll .c10:first-child { transform: rotate(180deg); }
.vscroll .thumb { width: 15px; height: 26px; margin: 297px 0 auto; border-radius: 7px; background: #606060; }
.statusbar { grid-area: 4 / 1 / 5 / 4; display: flex; align-items: stretch; padding: 0 16px 0 4px; font-size: 10px; font-weight: 500; border-top: 1px solid #484848; }
.mini { display: flex; align-items: center; background: #434343; padding-right: 4px; border-right: 1px solid #616161; }
.mini select { flex: 1; min-width: 0; padding: 3px 0 0 2px; color: #f2f2f2; line-height: 14px; }
.mini .c10 { margin-top: 3px; }
.zoom { width: 68px; margin-right: 4px; }
.page { width: 58px; margin: 0 5px 0 6px; }
.page select { padding-left: 3px; }
.step { width: 16px; justify-content: center; fill: #777; }
.step svg { width: 9px; height: 8px; }
.current-tool { flex: 0 0 200px; margin-left: 5px; padding-top: 2px; text-align: center; color: #d4d4d4; border: solid #464646; border-width: 0 1px; line-height: 14px; }
.play { padding: 0 7px; }
.hscroll { flex: 1; display: flex; align-items: center; padding: 0 4px 0 2px; background: #4a4a4a; }
.hscroll .thumb { width: 25px; height: 15px; margin: 0 auto 0 316px; border-radius: 7px; background: #606060; }

/* Docked panels */
.dock { width: 37px; flex: none; background: #535353; }
.group { padding: 1px 0 3px; border-bottom: 1px solid #373737; }
.group::before { margin: 2px 0 2px 9px; }
.group button { display: flex; width: 100%; height: 28px; align-items: center; justify-content: center; fill: #c4c4c4; }
.group svg { width: 20px; height: 20px; }

.taskbar { height: 3px; flex: none; display: flex; gap: 5px; padding-left: 246px; background: #86a8c4; border-top: 1px solid #1c2f40; }
.taskbar span { width: 58px; background: #eef4f8; }
.taskbar span:first-child { margin-right: 61px; }
```
FILE: rulers.js
```js
const NS = "http://www.w3.org/2000/svg";
const STEP = 65.75;

function add(parent, name, attrs, text) {
  const el = document.createElementNS(NS, name);
  for (const key in attrs) el.setAttribute(key, attrs[key]);
  if (text !== undefined) el.textContent = text;
  parent.appendChild(el);
}

const rx = document.getElementById("ruler-x");
const ry = document.getElementById("ruler-y");

for (let i = -2; i <= 81; i++) {
  const major = i % 5 === 0;
  const x = Math.round(28.3 + i * STEP / 5) + 0.5;
  add(rx, "line", { x1: x, x2: x, y1: major ? 0 : 13, y2: 17 });
  if (major) add(rx, "text", { x: x + 2, y: 12 }, String(i * 20));
}
add(rx, "line", { x1: 608.5, x2: 608.5, y1: 0, y2: 17, class: "cursor" });
add(rx, "line", { x1: 0.5, x2: 0.5, y1: 0, y2: 17 });

for (let i = -7; i <= 42; i++) {
  const major = i % 5 === 0;
  const y = Math.round(95.9 + i * STEP / 5) + 0.5;
  add(ry, "line", { x1: major ? 0 : 12, x2: 16, y1: y, y2: y });
  if (major) {
    const digits = String(Math.abs(i * 20)).split("").reverse();
    digits.forEach((d, n) => add(ry, "text", { x: 1, y: y - 3 - n * 12 }, d));
  }
}
add(ry, "line", { x1: 0, x2: 16, y1: 155.5, y2: 155.5, class: "cursor" });
```
